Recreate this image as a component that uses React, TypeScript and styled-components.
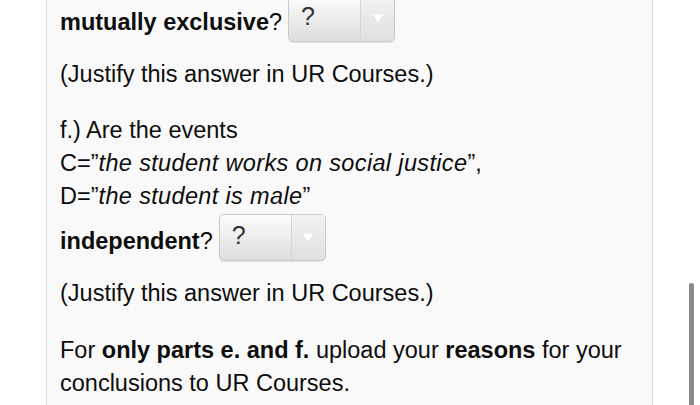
import React from 'react'
import styled, { createGlobalStyle } from 'styled-components'

const GlobalStyle = createGlobalStyle`
  html, body {
    margin: 0;
    padding: 0;
    background: #fff;
  }
  body {
    font-family: "Liberation Sans", Arial, Helvetica, sans-serif;
  }
`

type SelectProps = {
  value: string
}

const Dropdown = ({ value }: SelectProps) => (
  <SelectBox>
    <SelectValue>{value}</SelectValue>
    <SelectArrow>
      <svg width="14" height="11" viewBox="0 0 14 11">
        <path d="M1 1.5 L13 1.5 L7 10 Z" fill="#cfcfcf" transform="translate(0 0.8)" />
        <path d="M1 1.5 L13 1.5 L7 10 Z" fill="#ffffff" />
      </svg>
    </SelectArrow>
  </SelectBox>
)

const App = () => {
  return (
    <Page>
      <GlobalStyle />
      <Panel>
        <QuestionRow>
          <span><b>mutually exclusive</b>?</span>
          <Dropdown value="?" />
        </QuestionRow>
        <Para $after={23}>(Justify this answer in UR Courses.)</Para>

        <Para $after={1}>
          f.) Are the events<br />
          C=”<Em>the student works on social justice</Em>”,<br />
          D=”<Em>the student is male</Em>”
        </Para>
        <QuestionRow>
          <span><b>independent</b>?</span>
          <Dropdown value="?" />
        </QuestionRow>
        <Para $after={24}>(Justify this answer in UR Courses.)</Para>

        <Para $after={0}>
          For <b>only parts e. and f.</b> upload your <b>reasons</b> for your
          conclusions to UR Courses.
        </Para>
      </Panel>
      <ScrollThumb />
    </Page>
  )
}

const Page = styled.div`
  position: relative;
  width: 700px;
  height: 405px;
  overflow: hidden;
  background: #fff;
`

const Panel = styled.div`
  margin-left: 46px;
  margin-top: -5px;
  width: 592px;
  min-height: 420px;
  box-sizing: content-box;
  padding: 0 0 0 13px;
  background: #f9f9f9;
  border-left: 1px solid #dedede;
  border-right: 1px solid #dedede;
  color: #0d0d0d;
  font-size: 23.5px;
  line-height: 33px;
`

const QuestionRow = styled.div`
  display: flex;
  align-items: center;
  gap: 6px;
  height: 47px;
  margin-bottom: 16px;

  span {
    padding-top: 7px;
  }
`

const Para = styled.p<{ $after: number }>`
  margin: 0 0 ${p => p.$after}px 0;
  padding-right: 20px;
`

const Em = styled.i`
  letter-spacing: 0.35px;
`

const SelectBox = styled.div`
  display: flex;
  width: 105px;
  height: 45px;
  border: 1px solid #cacaca;
  border-radius: 5px;
  background: linear-gradient(#fdfdfd, #e9e9e9 60%, #dedede);
  box-shadow: 0 1px 1px rgba(0, 0, 0, 0.08);
  overflow: hidden;
`

const SelectValue = styled.div`
  flex: 1;
  padding-left: 12px;
  font-size: 25px;
  line-height: 40px;
  color: #333;
`

const SelectArrow = styled.div`
  width: 33px;
  display: flex;
  align-items: center;
  justify-content: center;
  border-left: 1px solid #d6d6d6;
  background: linear-gradient(#f2f2f2, #e0e0e0);
`

const ScrollThumb = styled.div`
  position: absolute;
  left: 689px;
  top: 283px;
  width: 5px;
  height: 130px;
  border-radius: 3px;
  background: #8a8a8a;
`

export default App
